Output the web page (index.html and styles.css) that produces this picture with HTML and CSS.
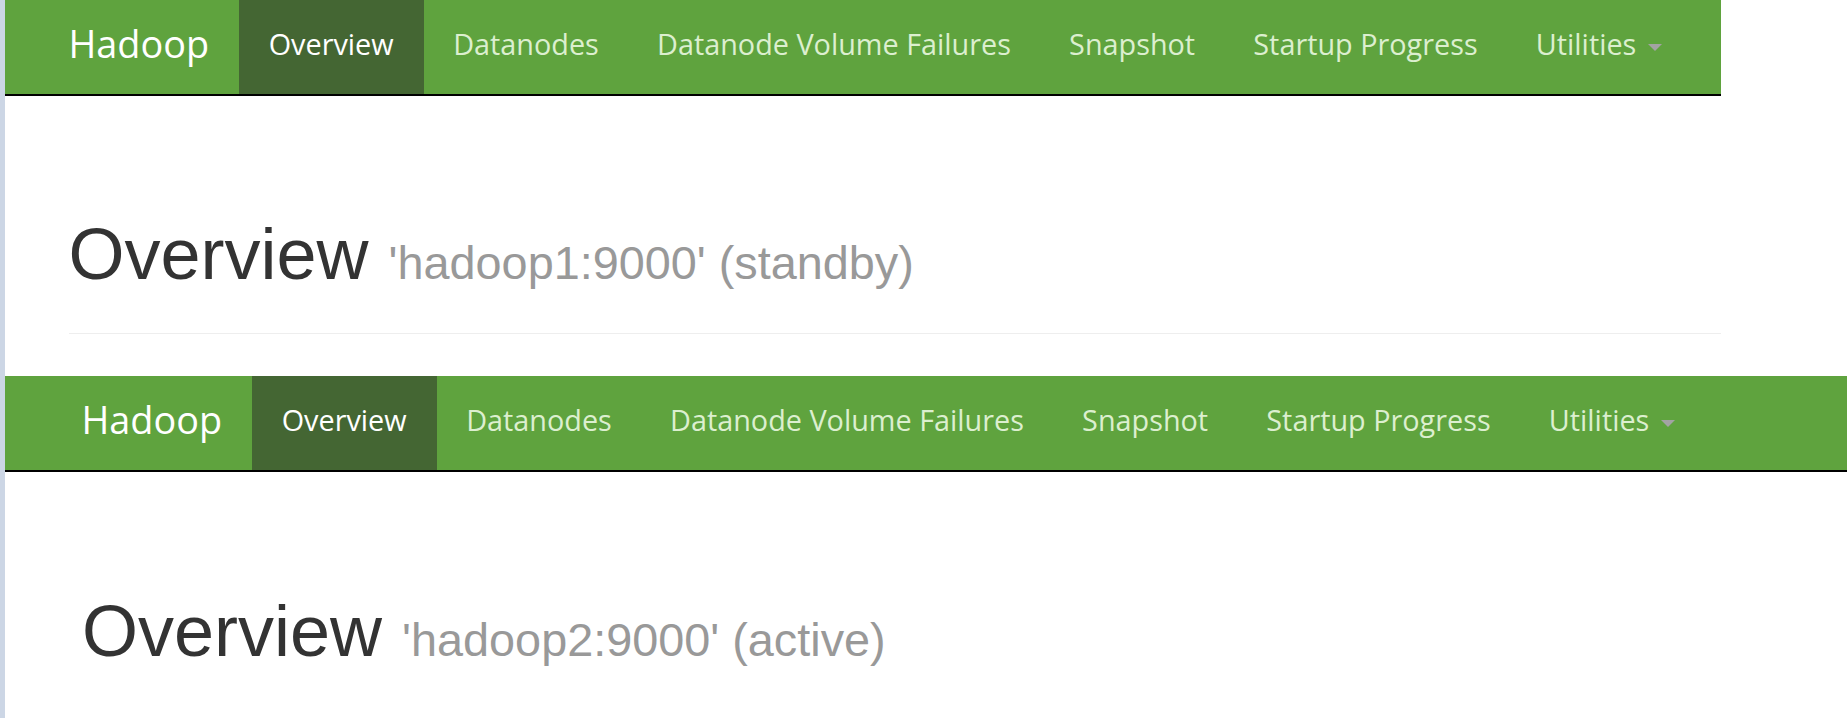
FILE: index.html
```html
<!DOCTYPE html>
<html lang="en">
<head>
<meta charset="utf-8">
<title>Hadoop Overview</title>
<link rel="stylesheet" href="styles.css">
</head>
<body>
<div class="page">
  <div class="strip"></div>
  <div class="shots">
    <section class="shot shot-standby">
      <nav class="navbar">
        <div class="navbar-brand">Hadoop</div>
        <ul class="nav">
          <li class="active"><a>Overview</a></li>
          <li><a>Datanodes</a></li>
          <li><a>Datanode Volume Failures</a></li>
          <li><a>Snapshot</a></li>
          <li><a>Startup Progress</a></li>
          <li><a>Utilities <b class="caret"></b></a></li>
        </ul>
      </nav>
      <div class="container">
        <div class="page-header">
          <h1>Overview <small>'hadoop1:9000' (standby)</small></h1>
        </div>
      </div>
    </section>
    <section class="shot shot-active">
      <nav class="navbar">
        <div class="navbar-brand">Hadoop</div>
        <ul class="nav">
          <li class="active"><a>Overview</a></li>
          <li><a>Datanodes</a></li>
          <li><a>Datanode Volume Failures</a></li>
          <li><a>Snapshot</a></li>
          <li><a>Startup Progress</a></li>
          <li><a>Utilities <b class="caret"></b></a></li>
        </ul>
      </nav>
      <div class="container">
        <div class="page-header">
          <h1>Overview <small>'hadoop2:9000' (active)</small></h1>
        </div>
      </div>
    </section>
  </div>
</div>
</body>
</html>
```
FILE: styles.css
```css
* { box-sizing: border-box; }
html, body { margin: 0; padding: 0; background: #fff; }
body { width: 1847px; height: 718px; overflow: hidden; }

.page { display: flex; height: 718px; }
.strip { width: 5px; flex: none; background: #ccd6e5; }
.shots { flex: 1; display: flex; flex-direction: column; min-width: 0; }

.shot { overflow: hidden; background: #fff; }
.shot-standby { width: 1716px; height: 376px; flex: none; }
.shot-active { width: 1842px; flex: 1; }

.navbar {
  display: flex;
  height: 96px;
  background: #5fa33e;
  border-bottom: 2px solid #000;
  padding-left: 31px;
  font-family: "Open Sans", "Noto Sans", sans-serif;
}
.shot-active .navbar { padding-left: 44px; }

.navbar-brand {
  color: #fff;
  font-size: 37.8px;
  line-height: 87px;
  height: 94px;
  padding: 0 30px 0 32.5px;
  white-space: nowrap;
}

.nav { display: flex; list-style: none; margin: 0; padding: 0; }
.nav li { display: flex; }
.nav a {
  display: block;
  height: 94px;
  color: #dcefcf;
  font-size: 28.8px;
  line-height: 87px;
  padding: 0 29.1px;
  white-space: nowrap;
}
.nav .active a { background: #446633; color: #fff; padding: 0 30.5px 0 29.6px; }

.caret {
  display: inline-block;
  width: 0;
  height: 0;
  margin-left: 4px;
  vertical-align: middle;
  border-top: 7px solid #a3a3a3;
  border-left: 7px solid transparent;
  border-right: 7px solid transparent;
}

.container { padding-left: 63.5px; }
.shot-active .container { padding-left: 77px; }

.page-header {
  margin-top: 119px;
  padding-bottom: 39px;
  border-bottom: 1px solid #eee;
}
.shot-active .page-header { margin-top: 120px; border-bottom: 0; }

h1 {
  margin: 0;
  font-family: "Liberation Sans", Arial, sans-serif;
  font-weight: 400;
  font-size: 72px;
  line-height: 1.1;
  color: #333;
  white-space: nowrap;
}
h1 small {
  font-size: 65%;
  color: #999;
}
```
